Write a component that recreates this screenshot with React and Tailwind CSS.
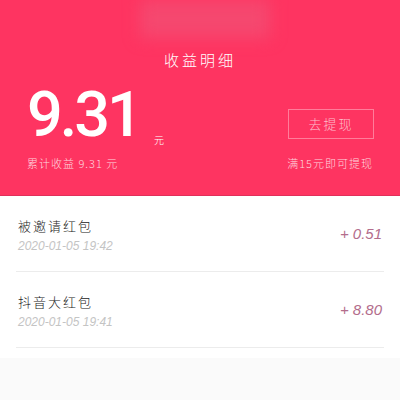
export default function App() {
  const rows = [
    { title: "被邀请红包", time: "2020-01-05 19:42", amount: "+ 0.51" },
    { title: "抖音大红包", time: "2020-01-05 19:41", amount: "+ 8.80" },
  ];

  return (
    <div
      className="w-[400px] h-[400px] overflow-hidden bg-[#fafafa]"
      style={{ fontFamily: '"Noto Sans CJK SC", "Noto Sans", sans-serif' }}
    >
      {/* header */}
      <div className="relative bg-[#fe3461] h-[196px] border-b border-[#e0305a]">
        <div className="absolute left-[140px] top-0 w-[130px] h-[38px] bg-[#f5486f] blur-sm" />
        <div className="h-[40px]" />
        <div className="relative text-center text-white text-[15px] font-light tracking-[3px] pt-[8px] leading-[24px]">
          收益明细
        </div>
        <div className="relative flex justify-between px-[27px] mt-[17px]">
          <div className="flex flex-col">
            <div className="flex items-end">
              <span
                className="text-white text-[63px] leading-[52px] font-medium tracking-[-3px]"
                style={{ fontFamily: '"Roboto", sans-serif' }}
              >
                9.31
              </span>
              <span className="text-white text-[10px] ml-[14px] mb-[-6px] font-light">元</span>
            </div>
            <div className="text-[#ffd6df] text-[11px] font-light mt-[14px] tracking-[1px]">
              累计收益 9.31 元
            </div>
          </div>
          <div className="flex flex-col items-end pt-[20px]">
            <div className="w-[86px] h-[30px] border border-[#ff7d9a] flex items-center justify-center text-[#ffbccb] text-[13px] font-light tracking-[2px] mr-[-1px]">
              去提现
            </div>
            <div className="text-[#ffd6df] text-[11px] font-light mt-[16px] tracking-[1px]">
              满15元即可提现
            </div>
          </div>
        </div>
      </div>

      {/* list */}
      <div className="bg-white px-[16px] pb-[10px]">
        {rows.map((r) => (
          <div
            key={r.title}
            className="flex items-center justify-between h-[76px] border-b border-[#ececec] pt-[2px]"
          >
            <div className="flex flex-col pl-[2px]">
              <span className="text-[#222] text-[13px] font-light tracking-[2px] leading-[18px]">
                {r.title}
              </span>
              <span
                className="text-[#c4c4c4] text-[12px] italic mt-[4px] leading-[14px]"
                style={{ fontFamily: '"Liberation Sans", sans-serif' }}
              >
                {r.time}
              </span>
            </div>
            <span
              className="text-[#b36d8c] text-[15px] italic font-light pr-[2px]"
              style={{ fontFamily: '"Liberation Sans", sans-serif' }}
            >
              {r.amount}
            </span>
          </div>
        ))}
      </div>
    </div>
  );
}
